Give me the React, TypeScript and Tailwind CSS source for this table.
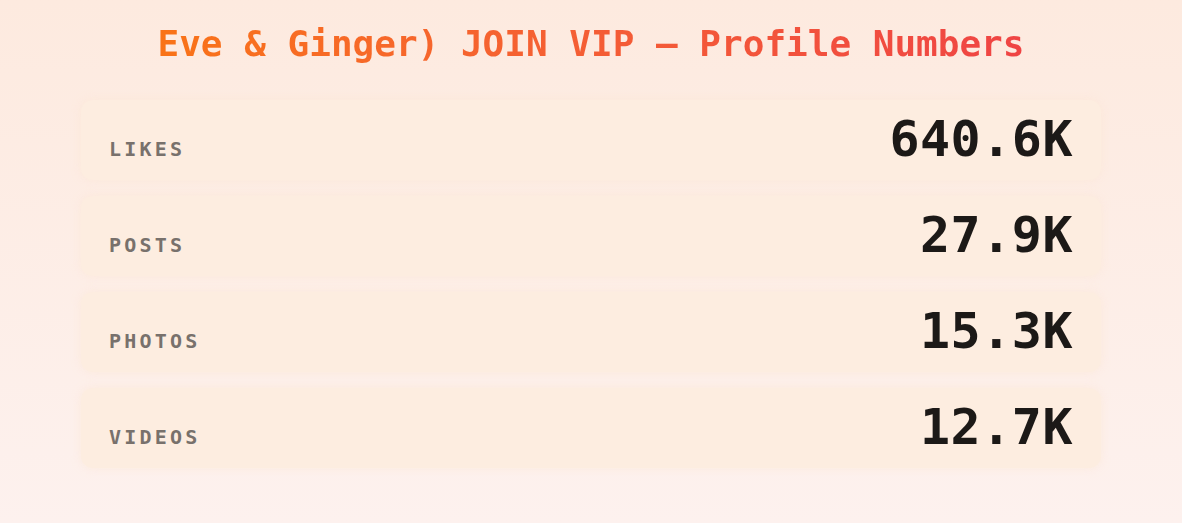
const stats = [
  { label: "Likes", value: "640.6K" },
  { label: "Posts", value: "27.9K" },
  { label: "Photos", value: "15.3K" },
  { label: "Videos", value: "12.7K" },
];

export default function App() {
  return (
    <div
      className="min-h-screen w-full bg-gradient-to-b from-[#fdeadf] to-[#fdf1ee] pt-6 pb-12"
      style={{ fontFamily: '"DejaVu Sans Mono", "Liberation Mono", monospace' }}
    >
      <div className="text-center">
        <h1 className="inline-block bg-gradient-to-r from-[#f97316] to-[#ef4444] bg-clip-text text-4xl font-bold leading-10 text-transparent">
          Eve &amp; Ginger) JOIN VIP — Profile Numbers
        </h1>
      </div>

      <div className="mx-auto mt-9 flex w-[1020px] flex-col gap-4">
        {stats.map((s) => (
          <div
            key={s.label}
            className="flex h-20 items-baseline justify-between rounded-xl bg-[#fdede0] px-7 pt-[14px] shadow-[0_0_8px_rgba(253,230,210,0.6)]"
          >
            <span className="text-xl font-bold uppercase tracking-[0.16em] text-[#78716c]">
              {s.label}
            </span>
            <span className="text-[50px] font-bold leading-none tracking-[0.01em] text-[#1c1917]">
              {s.value}
            </span>
          </div>
        ))}
      </div>
    </div>
  );
}
